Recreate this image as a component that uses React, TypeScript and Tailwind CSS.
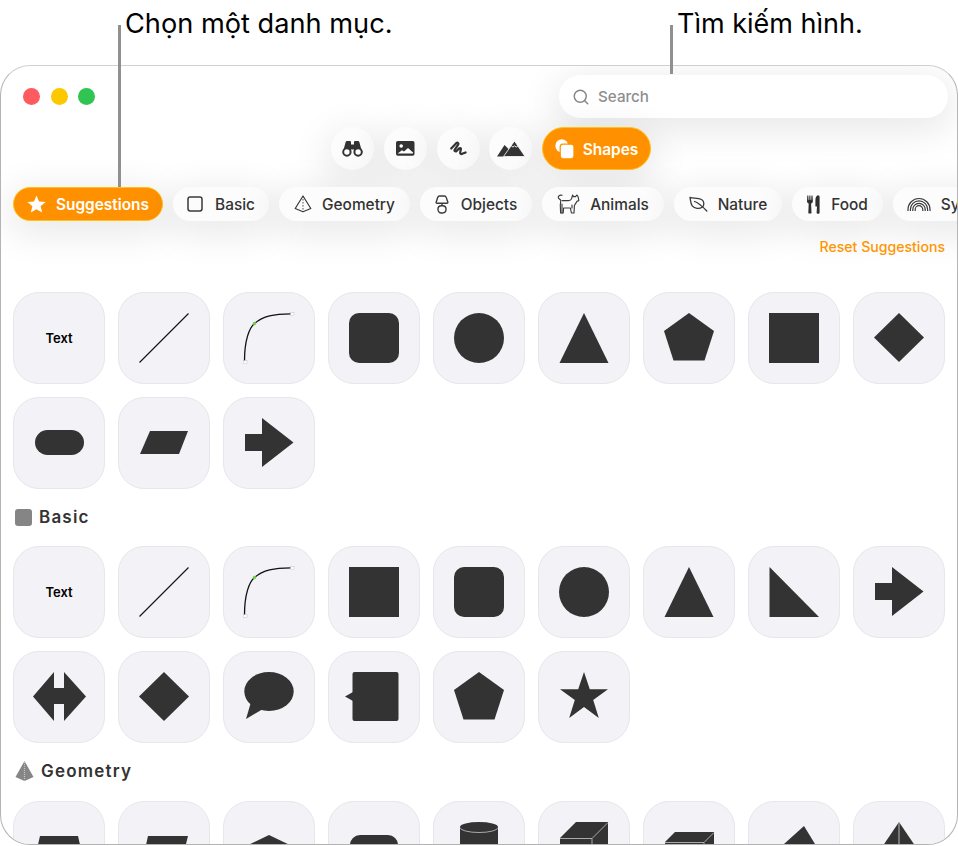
import { Search } from "lucide-react";
import type { ReactNode } from "react";

const ink = "#333333";

function Glyph({ children }: { children: ReactNode }) {
  return (
    <svg width="50" height="50" viewBox="0 0 50 50" className="overflow-visible" fill={ink}>
      {children}
    </svg>
  );
}

const TextGlyph = <span className="pt-[1px] text-[13px] font-semibold text-black">Text</span>;
const Line = (
  <Glyph>
    <line x1="0.5" y1="49.5" x2="49.5" y2="0.5" stroke="#111" strokeWidth="1.1" />
  </Glyph>
);
const Curve = (
  <Glyph>
    <path d="M0.5 48C0.5 28 5 15 10.5 10.5C19 3 30 0.8 47 0.8" fill="none" stroke="#111" strokeWidth="1.3" />
    <circle cx="10.5" cy="10.5" r="1.7" fill="#6fd14a" />
    <rect x="-0.5" y="47.5" width="3.5" height="3" fill="#fff" stroke="#bbb" strokeWidth="0.4" />
    <rect x="46.5" y="-0.3" width="3.5" height="3" fill="#fff" stroke="#bbb" strokeWidth="0.4" />
  </Glyph>
);
const Rounded = <Glyph><rect width="50" height="50" rx="10" /></Glyph>;
const Circle = <Glyph><circle cx="25" cy="25" r="25" /></Glyph>;
const Triangle = <Glyph><polygon points="25,0 49.5,50 0.5,50" /></Glyph>;
const Pentagon = <Glyph><polygon points="25,0 50,18 40.5,47.5 9.5,47.5 0,18" /></Glyph>;
const Square = <Glyph><rect width="50" height="50" /></Glyph>;
const Diamond = <Glyph><polygon points="25,0 50,24.5 25,49 0,24.5" /></Glyph>;
const Pill = <Glyph><rect x="1" y="12" width="49" height="25" rx="12.5" /></Glyph>;
const Parallelogram = <Glyph><polygon points="11,13 49,13 40,36 1,36" /></Glyph>;
const Arrow = <Glyph><polygon points="1,16 18,16 18,0 49.5,24.5 18,49 18,33 1,33" /></Glyph>;
const RightTriangle = <Glyph><polygon points="0.5,0 50,50 0.5,50" /></Glyph>;
const DoubleArrow = <Glyph><polygon points="-1,24.5 20,0 20,16 30,16 30,0 52,24.5 30,49 30,32 20,32 20,49" /></Glyph>;
const Speech = (
  <Glyph>
    <ellipse cx="25" cy="19.5" rx="24.7" ry="19.5" />
    <polygon points="7,30 2,47 19,37" />
  </Glyph>
);
const Callout = (
  <Glyph>
    <rect x="3.5" width="46" height="49" rx="2" />
    <polygon points="-4,24.5 4,20 4,29" />
  </Glyph>
);
const Star = <Glyph><polygon points="25,0 30.8,17.3 49,17.3 34.2,28 39.8,46 25,35 10.2,46 15.8,28 1,17.3 19.2,17.3" /></Glyph>;

const Trapezoid = <Glyph><polygon points="6,14 44,14 50,40 0,40" /></Glyph>;
const Slant = <Glyph><polygon points="9,14 49,14 40,50 1,50" /></Glyph>;
const House = <Glyph><polygon points="25,13 50,25 50,50 0,50 0,25" /></Glyph>;
const RoundedLow = <Glyph><rect x="1" y="13" width="48" height="40" rx="10" /></Glyph>;
const Cylinder = (
  <Glyph>
    <rect x="6" y="5" width="38" height="45" />
    <ellipse cx="25" cy="5" rx="19" ry="5" />
    <path d="M6 5.5A19 5 0 0 0 44 5.5" fill="none" stroke="#c8c8c8" strokeWidth="0.8" />
  </Glyph>
);
const Cube = (
  <Glyph>
    <polygon points="1,16 17,0 49,0 49,50 1,50" />
    <path d="M1 16.5H33L49 0.5M33 16.5V50" fill="none" stroke="#b8b8b8" strokeWidth="0.9" />
  </Glyph>
);
const FlatBox = (
  <Glyph>
    <polygon points="1,20 11,10 50,10 50,50 1,50" />
    <path d="M1 20.5H40L50 10.5M40 20.5V50" fill="none" stroke="#b8b8b8" strokeWidth="0.9" />
  </Glyph>
);
const Pyramid = <Glyph><polygon points="35,4 -5,40 57,40" /></Glyph>;
const Ridge = (
  <Glyph>
    <polygon points="25,0 0,37 50,37" />
    <line x1="25" y1="0" x2="25" y2="37" stroke="#c8c8c8" strokeWidth="0.9" />
  </Glyph>
);

const suggestions = [TextGlyph, Line, Curve, Rounded, Circle, Triangle, Pentagon, Square, Diamond, Pill, Parallelogram, Arrow];
const basic = [TextGlyph, Line, Curve, Square, Rounded, Circle, Triangle, RightTriangle, Arrow, DoubleArrow, Diamond, Speech, Callout, Pentagon, Star];
const geometry = [Trapezoid, Slant, House, RoundedLow, Cylinder, Cube, FlatBox, Pyramid, Ridge];

function TileGrid({ items }: { items: ReactNode[] }) {
  return (
    <div className="grid grid-cols-[repeat(9,92px)] gap-[13px]">
      {items.map((item, i) => (
        <div
          key={i}
          className="flex h-[92px] w-[92px] items-center justify-center rounded-[26px] border border-[#e6e6eb] bg-[#f2f2f7]"
        >
          {item}
        </div>
      ))}
    </div>
  );
}

function StarIcon() {
  return (
    <svg width="19" height="18" viewBox="0 0 19 18" fill="#fff">
      <polygon points="9.5,0.5 12,6.5 18.6,7 13.6,11.2 15.2,17.6 9.5,14.2 3.8,17.6 5.4,11.2 0.4,7 7,6.5" />
    </svg>
  );
}

function SquareIcon() {
  return (
    <svg width="16" height="16" viewBox="0 0 16 16" fill="none" stroke="#3a3a3a" strokeWidth="1.5">
      <rect x="1" y="1" width="14" height="14" rx="2.2" />
    </svg>
  );
}

function PyramidIcon() {
  return (
    <svg width="18" height="18" viewBox="0 0 18 18" fill="none" stroke="#3a3a3a" strokeWidth="1.2" strokeLinejoin="round">
      <path d="M9 1L1.2 13.5L9 16.8L16.8 13.5Z" />
      <path d="M9 1V16.8" strokeDasharray="1.5 1.5" strokeWidth="0.9" />
    </svg>
  );
}

function LampIcon() {
  return (
    <svg width="14" height="19" viewBox="0 0 14 19" fill="none" stroke="#3a3a3a" strokeWidth="1.4" strokeLinejoin="round">
      <path d="M4.5 1H9.5C10.5 1 11 1.7 11.3 2.6L12.8 7C13 7.7 12.6 8.3 12 8.3H2C1.4 8.3 1 7.7 1.2 7L2.7 2.6C3 1.7 3.5 1 4.5 1Z" />
      <path d="M7 8.3V10.5" />
      <rect x="3" y="10.7" width="8" height="7.3" rx="3.4" />
    </svg>
  );
}

function DogIcon() {
  return (
    <svg width="23" height="20" viewBox="0 0 23 20" fill="none" stroke="#3a3a3a" strokeWidth="1.15" strokeLinejoin="round" strokeLinecap="round">
      <path d="M5 1.3C2.6 0.8 1 2 1.3 3.6C1.6 5 3 5 3.8 6.5L3.3 11L3.6 19H6.2L6.6 14H13.4L14.4 19H17L17.4 11.5C18.4 10 19.4 8.5 20 7.3L21.8 6.6L21.2 3L20 1L18.5 2.6H16.6L15.6 1L14.6 4.6C14 6.1 13 6.6 11.5 6.6H5.2" />
      <path d="M5 10V19M15 11V14" />
    </svg>
  );
}

function LeafIcon() {
  return (
    <svg width="19" height="16" viewBox="0 0 19 16" fill="none" stroke="#3a3a3a" strokeWidth="1.3" strokeLinecap="round" strokeLinejoin="round">
      <path d="M1 1.3C4 2.5 9 1.5 12.5 3.5C15.5 5.2 15.5 9.5 13.2 11.3C10.5 13 5.5 12.8 3.2 9.8C1.5 7.5 1.5 4 1 1.3Z" />
      <path d="M5.5 5.5C9 6.5 13 10 17.8 15" />
    </svg>
  );
}

function ForkKnifeIcon() {
  return (
    <svg width="13" height="19" viewBox="0 0 13 19" fill="#2f2f2f">
      <path d="M0.3 0.5H1.3L1.6 5H2.2L2.4 0.5H3.4L3.6 5H4.2L4.5 0.5H5.5L5.9 6.2C5.9 7.5 5 8.2 4.1 8.5L4.5 18C4.5 18.8 1.3 18.8 1.3 18L1.7 8.5C0.8 8.2 0 7.5 0 6.2Z" />
      <path d="M11 0.3C12 0.3 12.6 1 12.6 2V18C12.6 18.9 9.6 18.9 9.6 18L10 11.5H8.4V5.5C8.4 2.5 9.5 0.3 11 0.3Z" />
    </svg>
  );
}

function RainbowIcon() {
  return (
    <svg width="24" height="14" viewBox="0 0 24 14" fill="none" stroke="#3a3a3a" strokeWidth="1.2">
      <path d="M1 14V12.5A11 11 0 0 1 23 12.5V14" />
      <path d="M3.4 14V12.5A8.6 8.6 0 0 1 20.6 12.5V14" />
      <path d="M5.8 14V12.5A6.2 6.2 0 0 1 18.2 12.5V14" />
      <path d="M8.2 14V12.5A3.8 3.8 0 0 1 15.8 12.5V14" />
    </svg>
  );
}

function BinocularsIcon() {
  return (
    <svg width="21" height="16" viewBox="0 0 21 16" fill="#333">
      <path d="M3.6 1.2C3.8 0.4 4.4 0 5.2 0H7.6C8.5 0 9 0.5 9 1.3V10H1.2Z" />
      <path d="M17.4 1.2C17.2 0.4 16.6 0 15.8 0H13.4C12.5 0 12 0.5 12 1.3V10H19.8Z" />
      <rect x="8.5" y="3.5" width="4" height="5" />
      <circle cx="4.9" cy="11" r="3.7" fill="#fff" stroke="#333" strokeWidth="2" />
      <circle cx="16.1" cy="11" r="3.7" fill="#fff" stroke="#333" strokeWidth="2" />
    </svg>
  );
}

function PhotoIcon() {
  return (
    <svg width="19" height="15" viewBox="0 0 19 15">
      <rect width="18.5" height="14.8" rx="1.8" fill="#333" />
      <circle cx="5.2" cy="5" r="1.8" fill="#fff" />
      <path d="M1.6 12.6L6 9.2L8 10.4L12 7L17 11.4V12.6Z" fill="#fff" />
    </svg>
  );
}

function ScribbleIcon() {
  return (
    <svg width="17" height="16" viewBox="0 0 17 16" fill="none" stroke="#333" strokeWidth="2.2" strokeLinecap="round" strokeLinejoin="round">
      <path d="M1.2 7.5L6.2 2.2C7.6 1 9 2.3 8 3.8L4.8 8.6C4 10 5.4 11 6.8 9.8L9.2 7.4C10.2 6.5 11.2 7.4 10.8 8.5L10.2 11.4C10 12.8 11.2 13.4 12.2 12.8L15.6 11.4" />
    </svg>
  );
}

function MountainsIcon() {
  return (
    <svg width="28" height="16" viewBox="0 0 28 16">
      <polygon points="7.5,4 0,15.5 10,15.5 13,9.5" fill="#333" />
      <polygon points="17.5,0 28,15.5 6.5,15.5" fill="#333" stroke="#fff" strokeWidth="0.8" />
      <path d="M14.2 4.8L16 6.1L17.5 4.8L19.2 6.1L21 4.8" fill="none" stroke="#fff" strokeWidth="0.9" />
    </svg>
  );
}

function ShapesIcon() {
  return (
    <svg width="19" height="20" viewBox="0 0 19 20">
      <circle cx="6.8" cy="6.8" r="6.5" fill="#fff" />
      <rect x="5.2" y="5.2" width="13.8" height="14.6" rx="2.8" fill="#fff" stroke="#ff9500" strokeWidth="1.3" />
    </svg>
  );
}

const toolIcons = [
  <BinocularsIcon key="b" />,
  <PhotoIcon key="p" />,
  <ScribbleIcon key="s" />,
  <MountainsIcon key="m" />,
];

const softShadow = "shadow-[0_8px_36px_6px_rgba(0,0,0,0.085)]";

function CategoryPill({ icon, label, width, gap }: { icon: ReactNode; label: string; width: string; gap: string }) {
  return (
    <div className={`flex h-[34px] shrink-0 items-center justify-center rounded-full bg-[#fcfcfc] text-[15.4px] font-medium text-[#333] shadow-[0_8px_36px_6px_rgba(0,0,0,0.085)] ${width} ${gap}`}>
      {icon}
      <span className="pt-[2px]">{label}</span>
    </div>
  );
}

function SectionHeading({ icon, label, className }: { icon: ReactNode; label: string; className: string }) {
  return (
    <div className={`flex h-[22px] items-center gap-[7px] pl-[2px] text-[17px] font-semibold tracking-[1.2px] text-[#333] ${className}`}>
      {icon}
      <span className="pt-[1px]">{label}</span>
    </div>
  );
}

export default function App() {
  return (
    <div className="relative h-[846px] w-[958px] overflow-hidden bg-white font-['Inter',sans-serif]">
      {/* callouts */}
      <span className="absolute left-[125px] top-[6px] text-[27.2px] leading-[36px] text-black">Chọn một danh mục.</span>
      <span className="absolute left-[677px] top-[6px] text-[27px] leading-[36px] text-black">Tìm kiếm hình.</span>
      <div className="absolute left-[117.5px] top-[25px] z-10 h-[162px] w-[3px] bg-[#909090]" />
      <div className="absolute left-[669.5px] top-[25px] z-10 h-[49px] w-[3px] bg-[#909090]" />

      <div className="mt-[65px] h-[780px] w-[958px] overflow-hidden rounded-[30px] border border-[#b4b4b4] border-t-[#d0d0d0] bg-white">
        <div className="flex items-center justify-between pl-[22px] pr-[9px] pt-[9px]">
          <div className="flex gap-[10.5px]">
            <span className="h-[17px] w-[17px] rounded-full bg-[#ff5a5f]" />
            <span className="h-[17px] w-[17px] rounded-full bg-[#fcc800]" />
            <span className="h-[17px] w-[17px] rounded-full bg-[#30c552]" />
          </div>
          <div className={`flex h-[43px] w-[389px] items-center gap-[8px] rounded-full bg-white pl-[13px] ${softShadow}`}>
            <Search size={18} strokeWidth={1.9} color="#858585" />
            <span className="pt-[2px] text-[15.2px] font-medium text-[#8e8e8e]">Search</span>
          </div>
        </div>

        <div className="ml-[330px] mt-[9px] flex gap-[9.75px]">
          {toolIcons.map((icon) => (
            <div key={icon.key} className={`flex h-[43px] w-[43px] items-center justify-center rounded-full bg-[#fcfcfc] ${softShadow}`}>
              {icon}
            </div>
          ))}
          <div className={`flex h-[43px] w-[109px] items-center justify-center gap-[9px] rounded-full border border-[#ffc21a] bg-[#ff9100] text-[15.4px] font-semibold text-white ${softShadow}`}>
            <ShapesIcon />
            <span className="pt-[2px]">Shapes</span>
          </div>
        </div>

        <div className="ml-[12px] mt-[17px] flex gap-[10px]">
          <div className={`flex h-[34px] w-[150px] shrink-0 items-center justify-center gap-[10px] rounded-full border border-[#ffc21a] bg-[#ff9100] text-[15.4px] font-semibold text-white ${softShadow}`}>
            <StarIcon />
            <span className="pt-[2px]">Suggestions</span>
          </div>
          <CategoryPill icon={<SquareIcon />} label="Basic" width="w-[96px]" gap="gap-[12px]" />
          <CategoryPill icon={<PyramidIcon />} label="Geometry" width="w-[131px]" gap="gap-[10px]" />
          <CategoryPill icon={<LampIcon />} label="Objects" width="w-[112px]" gap="gap-[12px]" />
          <CategoryPill icon={<DogIcon />} label="Animals" width="w-[122px]" gap="gap-[10px]" />
          <CategoryPill icon={<LeafIcon />} label="Nature" width="w-[108px]" gap="gap-[10px]" />
          <CategoryPill icon={<ForkKnifeIcon />} label="Food" width="w-[91px]" gap="gap-[11px]" />
          <CategoryPill icon={<RainbowIcon />} label="Symbols" width="w-[125px]" gap="gap-[10px]" />
        </div>

        <div className="mt-[16px] flex h-[20px] items-center justify-end pr-[12px] text-[14.1px] font-medium text-[#ff9500]">
          Reset Suggestions
        </div>

        <div className="mt-[35px] pl-[12px]">
          <TileGrid items={suggestions} />
          <SectionHeading
            className="mt-[17px] mb-[18px]"
            label="Basic"
            icon={<span className="h-[17px] w-[17px] rounded-[3px] bg-[#858585]" />}
          />
          <TileGrid items={basic} />
          <SectionHeading
            className="mt-[17px] mb-[19px]"
            label="Geometry"
            icon={
              <svg width="19" height="20" viewBox="0 0 19 20">
                <polygon points="9.5,0 0.5,16 9.5,20 18.5,16" fill="#858585" />
                <line x1="9.5" y1="1" x2="9.5" y2="19.5" stroke="#c8c8c8" strokeWidth="1.2" strokeDasharray="1 1" />
              </svg>
            }
          />
          <TileGrid items={geometry} />
        </div>
      </div>
    </div>
  );
}
